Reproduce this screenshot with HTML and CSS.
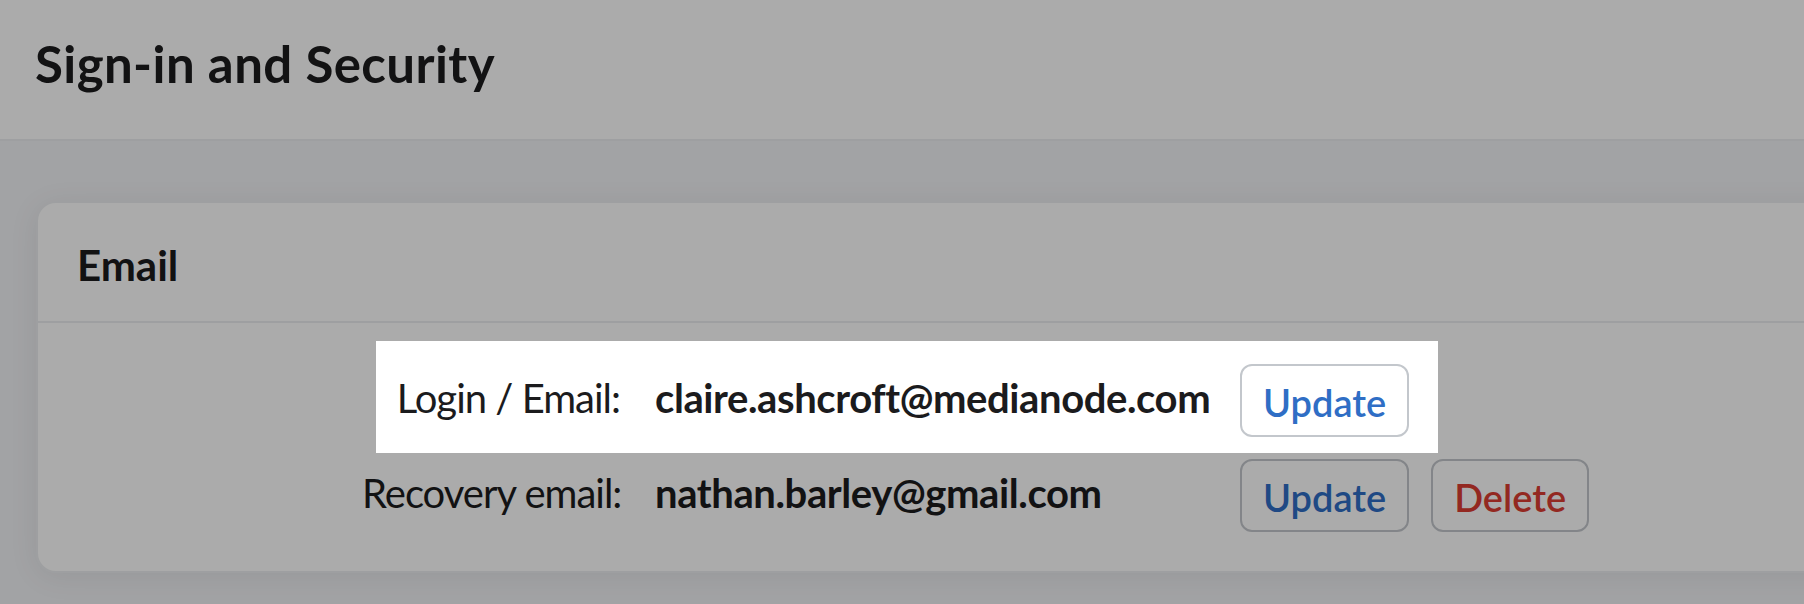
FILE: index.html
```html
<!DOCTYPE html>
<html lang="en">
<head>
<meta charset="utf-8">
<title>Sign-in and Security</title>
<link rel="stylesheet" href="styles.css">
</head>
<body>
<header class="topbar">
  <h1 class="page-title">Sign-in and Security</h1>
</header>
<main class="content">
  <section class="card">
    <div class="card-head">
      <h2 class="card-title">Email</h2>
    </div>
    <div class="card-body">
      <div class="email-row is-spotlit">
        <span class="label">Login / Email:</span>
        <span class="value">claire.ashcroft@medianode.com</span>
        <div class="actions">
          <button class="btn btn-update" type="button">Update</button>
        </div>
      </div>
      <div class="email-row">
        <span class="label">Recovery email:</span>
        <span class="value">nathan.barley@gmail.com</span>
        <div class="actions">
          <button class="btn btn-update" type="button">Update</button>
          <button class="btn btn-delete" type="button">Delete</button>
        </div>
      </div>
    </div>
  </section>
</main>
</body>
</html>
```
FILE: styles.css
```css
html {
  overflow: hidden;
  min-height: 100%;
  background: #f2f3f6;
}

body {
  margin: 0;
  padding: 0;
  min-height: 100vh;
  background: #f2f3f6;
  font-family: Lato, "Noto Sans", sans-serif;
  color: #1b1b1d;
}

.topbar {
  height: 139px;
  box-sizing: content-box;
  background: #ffffff;
  border-bottom: 2px solid #eceef0;
  padding: 0 0 0 35px;
}

.page-title {
  margin: 0;
  padding-top: 38px;
  font-size: 51px;
  line-height: 1;
  font-weight: 700;
  letter-spacing: 0.4px;
}

.content {
  padding: 60px 0 0 36px;
}

.card {
  margin-right: -140px;
  background: #ffffff;
  border: 2px solid #eceef0;
  border-radius: 20px;
  box-shadow: 0 4px 30px rgba(0, 0, 0, 0.07);
}

.card-head {
  height: 120px;
  box-sizing: border-box;
  padding: 41px 0 0 39px;
  border-bottom: 2px solid #eceef0;
}

.card-title {
  margin: 0;
  font-size: 42px;
  line-height: 1;
  font-weight: 700;
}

.card-body {
  display: flex;
  flex-direction: column;
  align-items: flex-start;
  gap: 22px;
  padding: 41px 0 39px 324px;
}

.email-row {
  display: grid;
  grid-template-columns: 258px 550px auto;
  column-gap: 35px;
  align-items: center;
}

.label,
.value {
  font-size: 40px;
  line-height: 1;
  margin-bottom: 5px;
  white-space: nowrap;
}

.label {
  text-align: right;
  font-weight: 400;
  letter-spacing: -1px;
}

.value {
  font-weight: 700;
  letter-spacing: -0.4px;
}

.actions {
  display: flex;
  gap: 22px;
}

.btn {
  height: 73px;
  box-sizing: border-box;
  padding: 3px 21px 0;
  background: #ffffff;
  border: 2px solid #c3c7cc;
  border-radius: 12px;
  font-family: inherit;
  font-size: 38px;
  line-height: 1;
  font-weight: 600;
}

.btn-update {
  color: #2f6ec5;
}

.btn-delete {
  color: #dc3d32;
}

/* Tutorial spotlight: white window over the highlighted row, dim overlay elsewhere */
.is-spotlit {
  position: relative;
  z-index: 1;
}

.is-spotlit::before {
  content: "";
  position: absolute;
  top: -23px;
  bottom: -16px;
  left: 14px;
  right: -29px;
  z-index: -1;
  background: #ffffff;
  box-shadow: 0 0 0 4000px rgba(0, 0, 0, 0.33);
}
```
